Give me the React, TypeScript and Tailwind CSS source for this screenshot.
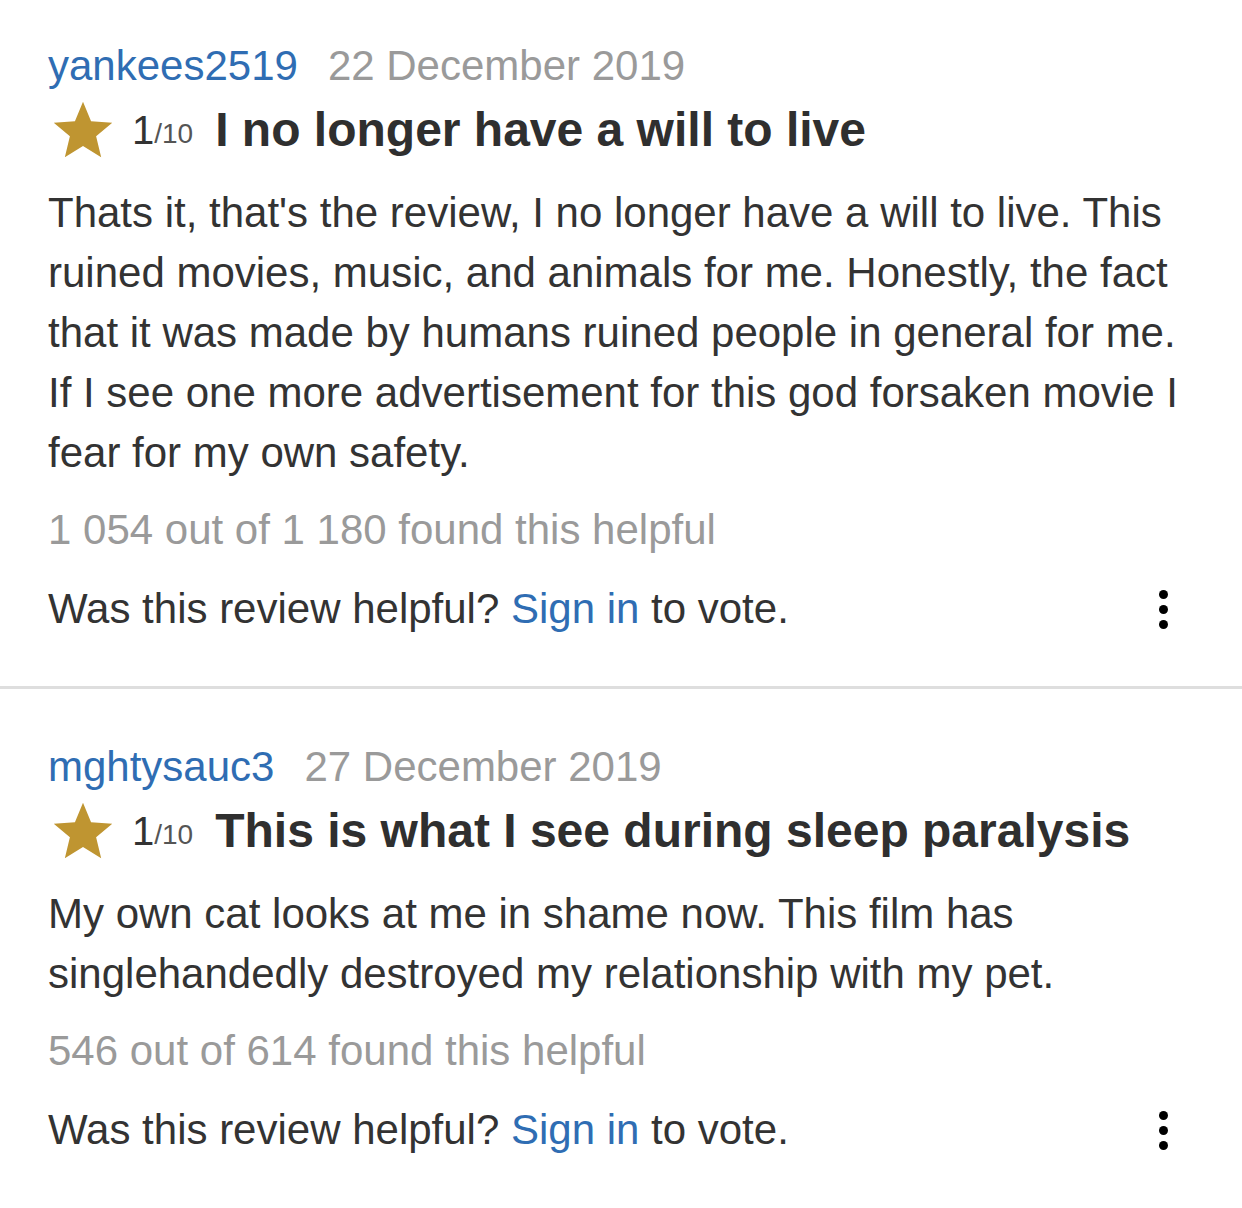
import React from 'react';

interface Review {
  user: string;
  date: string;
  title: string;
  body: string;
  helpful: string;
}

const reviews: Review[] = [
  {
    user: 'yankees2519',
    date: '22 December 2019',
    title: 'I no longer have a will to live',
    body: "Thats it, that's the review, I no longer have a will to live. This ruined movies, music, and animals for me. Honestly, the fact that it was made by humans ruined people in general for me. If I see one more advertisement for this god forsaken movie I fear for my own safety.",
    helpful: '1 054 out of 1 180 found this helpful',
  },
  {
    user: 'mghtysauc3',
    date: '27 December 2019',
    title: 'This is what I see during sleep paralysis',
    body: 'My own cat looks at me in shame now. This film has singlehandedly destroyed my relationship with my pet.',
    helpful: '546 out of 614 found this helpful',
  },
];

const Star = () => (
  <svg width="62" height="58" viewBox="0 0 24 23" className="shrink-0">
    <path d="M12 0.3l3.2 7.7 8.4 0.6-6.4 5.4 2 8.3-7.2-4.5-7.2 4.5 2-8.3L0.4 8.6l8.4-0.6z" fill="#bf9531" />
  </svg>
);

const Dots = () => (
  <div className="flex flex-col items-center gap-[6px]">
    <span className="block h-[9px] w-[9px] rounded-full bg-black" />
    <span className="block h-[9px] w-[9px] rounded-full bg-black" />
    <span className="block h-[9px] w-[9px] rounded-full bg-black" />
  </div>
);

const ReviewCard: React.FC<{ review: Review; first?: boolean; last?: boolean }> = ({ review, first, last }) => (
  <div
    className={`pl-[48px] pr-[40px] pb-[53px] ${first ? 'pt-[42px]' : 'pt-[54px]'} ${
      last ? '' : 'border-b-[3px] border-[#dedede]'
    }`}
  >
    <div className="flex items-baseline gap-[30px] text-[42px] leading-[48px]">
      <span className="text-[#2f6db3]">{review.user}</span>
      <span className="text-[#9a9a9a]">{review.date}</span>
    </div>
    <div className="mt-[11px] flex h-[58px] items-center">
      <div className="ml-[4px] mr-[18px]">
        <Star />
      </div>
      <span className="text-[40px] leading-none text-[#333]">1</span>
      <span className="mb-[-8px] text-[28px] leading-none text-[#555]">/10</span>
      <h2 className="ml-[22px] whitespace-nowrap text-[48px] font-bold leading-[56px] text-[#2f2f2f]">
        {review.title}
      </h2>
    </div>
    <p className="mt-[24px] text-[42px] leading-[60px] text-[#333]">{review.body}</p>
    <p className="mt-[23px] text-[42px] leading-[48px] text-[#9a9a9a]">{review.helpful}</p>
    <div className="mt-[31px] flex items-center justify-between">
      <p className="text-[42px] leading-[48px] text-[#333]">
        Was this review helpful? <span className="text-[#2f6db3]">Sign in</span> to vote.
      </p>
      <div className="mr-[34px]">
        <Dots />
      </div>
    </div>
  </div>
);

export default function App() {
  return (
    <div className="min-h-[1208px] w-[1242px] bg-white font-['Liberation_Sans',Arial,sans-serif]">
      {reviews.map((r, i) => (
        <ReviewCard key={r.user} review={r} first={i === 0} last={i === reviews.length - 1} />
      ))}
    </div>
  );
}
